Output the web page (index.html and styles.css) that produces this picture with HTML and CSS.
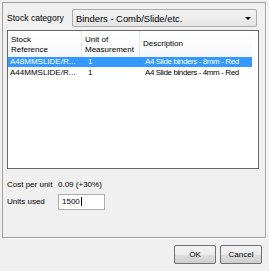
FILE: index.html
```html
<!DOCTYPE html>
<html>
<head>
<meta charset="utf-8">
<link rel="stylesheet" href="styles.css">
</head>
<body>
<div class="dialog">
  <div class="panel">
    <div class="cat-row">
      <span class="label">Stock category</span>
      <div class="combo">
        <span>Binders - Comb/Slide/etc.</span>
        <svg class="arrow" width="6" height="3" viewBox="0 0 6 3"><path d="M0 0H6L3 3Z" fill="#000"/></svg>
      </div>
    </div>
    <div class="list">
      <div class="header">
        <div class="hcell c1">Stock<br>Reference</div>
        <div class="hcell c2">Unit of<br>Measurement</div>
        <div class="hcell c3">Description</div>
      </div>
      <div class="row selected">
        <div class="cell c1">A48MMSLIDE/R...</div>
        <div class="cell c2">1</div>
        <div class="cell c3">A4 Slide binders - 8mm - Red</div>
      </div>
      <div class="row">
        <div class="cell c1">A44MMSLIDE/R...</div>
        <div class="cell c2">1</div>
        <div class="cell c3">A4 Slide binders - 4mm - Red</div>
      </div>
    </div>
    <div class="field first">
      <span class="label flabel">Cost per unit</span>
      <span class="value">0.09 (+30%)</span>
    </div>
    <div class="field">
      <span class="label flabel">Units used</span>
      <div class="input">1500<span class="caret"></span></div>
    </div>
  </div>
  <div class="buttons">
    <button class="btn">OK</button>
    <button class="btn">Cancel</button>
  </div>
</div>
</body>
</html>
```

FILE: styles.css
```css
html, body {
  margin: 0;
  padding: 0;
  background: #f0f0f0;
}
body {
  width: 269px;
  height: 271px;
  font-family: "Liberation Sans", Arial, sans-serif;
  font-size: 8px;
  color: #000;
}
.dialog {
  padding: 2px 3px 0 2px;
}
.panel {
  height: 236px;
  box-sizing: border-box;
  border: 1px solid #a0a0a0;
  box-shadow: 1px 1px 0 #ffffff;
  padding: 6px 6px 0 4px;
}
.cat-row {
  display: flex;
  align-items: center;
  height: 18px;
}
.label {
  width: 65px;
  flex: none;
  font-size: 8.6px;
}
.combo {
  flex: 1;
  height: 18px;
  margin-right: 2px;
  box-sizing: border-box;
  border: 1px solid #acacac;
  border-radius: 2px;
  background: linear-gradient(#f2f2f2, #e5e5e5);
  display: flex;
  align-items: center;
  padding: 0 5px 0 3px;
  font-size: 9.4px;
}
.combo span { flex: 1; }
.arrow { flex: none; margin-top: 1px; }
.list {
  margin-top: 3px;
  height: 139px;
  box-sizing: border-box;
  border: 1px solid #666;
  background: #fff;
  padding-right: 6px;
}
.header {
  display: flex;
  height: 26px;
  line-height: 10px;
  background: linear-gradient(#ffffff, #f7f8fa);
}
.hcell {
  box-sizing: border-box;
  padding: 4px 0 0 3px;
  border-right: 1px solid #e3e6eb;
}
.hcell.c3 {
  display: flex;
  align-items: center;
  padding-top: 0;
  border-right: none;
}
.c1 { width: 74px; flex: none; }
.c2 { width: 58px; flex: none; }
.c3 { flex: 1; }
.row {
  display: flex;
  height: 10px;
  line-height: 10px;
}
.row .cell { padding-left: 2px; white-space: nowrap; }
.row .cell.c2 { padding-left: 4px; box-sizing: border-box; }
.row .cell.c3 { padding-left: 3px; letter-spacing: -0.4px; }
.row + .row { margin-top: 1px; }
.selected {
  background: #3399ff;
  color: #fff;
}
.field {
  display: flex;
  align-items: center;
  height: 17px;
}
.field.first { margin-top: 7px; }
.flabel { width: 51px; font-size: 8px; }
.input {
  width: 47px;
  height: 16px;
  box-sizing: border-box;
  border: 1px solid #abadb3;
  background: #fff;
  padding-left: 3px;
  display: flex;
  align-items: center;
}
.caret {
  display: inline-block;
  width: 1px;
  height: 9px;
  background: #000;
  margin-left: 1px;
}
.buttons {
  display: flex;
  justify-content: flex-end;
  gap: 4px;
  padding: 7px 4px 0 0;
}
.btn {
  width: 42px;
  height: 19px;
  font-family: inherit;
  font-size: 8px;
  color: #000;
  border: 1px solid #707070;
  border-radius: 2px;
  background: linear-gradient(#f2f2f2 0%, #ebebeb 50%, #dddddd 51%, #cfcfcf 100%);
  padding: 0;
}
```
